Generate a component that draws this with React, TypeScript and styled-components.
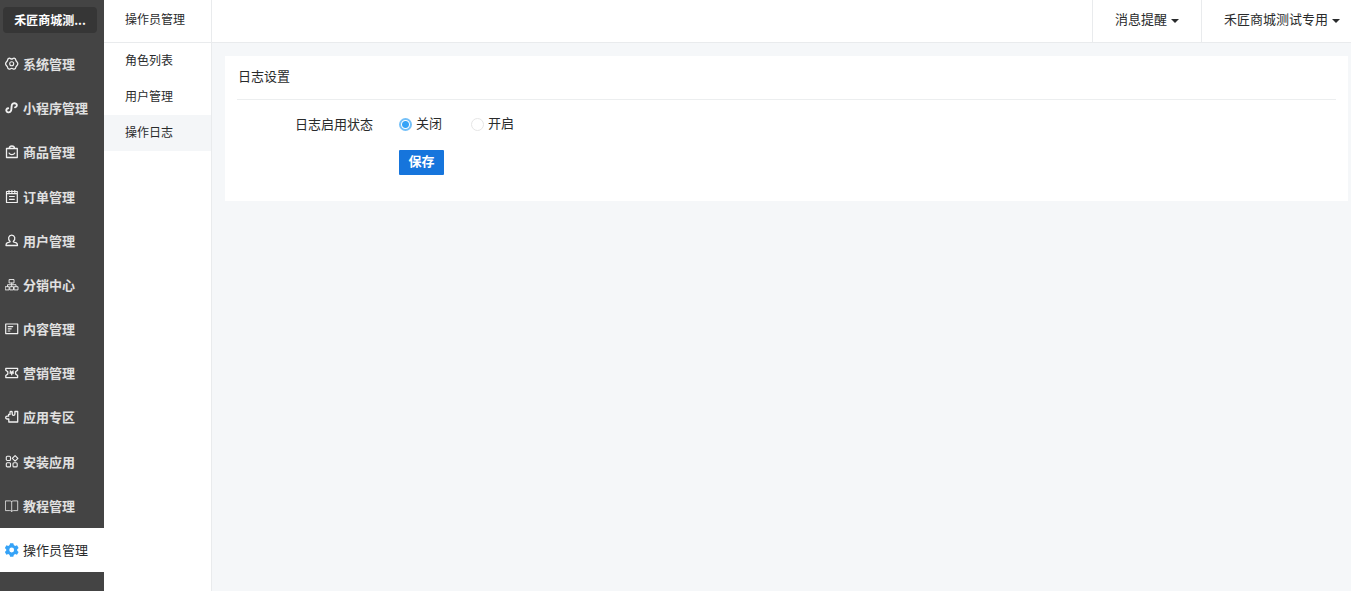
import React, { useState } from "react";
import styled, { createGlobalStyle, css } from "styled-components";

const GlobalStyle = createGlobalStyle`
  * { box-sizing: border-box; }
  body {
    margin: 0;
    background: #f5f7f9;
    color: #292b2c;
    font-family: "Noto Sans CJK SC", sans-serif;
    font-size: 13px;
    line-height: 20px;
  }
  button, input { font: inherit; color: inherit; }
  a { color: inherit; text-decoration: none; }
`;

const Shell = styled.div`
  display: flex;
  min-height: 100vh;
`;

const Sidebar = styled.aside`
  flex: none;
  width: 104px;
  background: #444;
`;

const StoreName = styled.div`
  height: 26px;
  margin: 7px 7px 9px 3px;
  padding: 0 10px;
  border-radius: 4px;
  background: #363636;
  color: #fff;
  font-size: 12px;
  font-weight: bold;
  line-height: 26px;
  text-align: center;
  white-space: nowrap;
`;

const MainNav = styled.nav`
  display: grid;
  grid-auto-rows: 1fr;
  height: 530px;
`;

const NavLink = styled.a<{ $active?: boolean }>`
  display: flex;
  align-items: center;
  gap: 4px;
  padding-left: 5px;
  color: #e0e0e0;
  font-weight: bold;
  white-space: nowrap;
  ${(p) =>
    p.$active &&
    css`
      background: #fff;
      color: #292b2c;
      font-weight: normal;
    `}
`;

const Icon = styled.svg`
  flex: none;
  width: 14px;
  height: 14px;
  fill: none;
  stroke: #f0f0f0;
  stroke-width: 1.1;
  stroke-linejoin: round;
  stroke-linecap: round;
`;

const SubMenu = styled.nav`
  flex: none;
  width: 108px;
  background: #fff;
  border-right: 1px solid #e9ebed;
  font-size: 12px;
`;

const SubTitle = styled.div`
  height: 43px;
  padding: 9px 21px 0;
  border-bottom: 1px solid #e9ebed;
`;

const SubLink = styled.a<{ $active?: boolean }>`
  display: block;
  height: 36px;
  padding: 0 21px;
  line-height: 34px;
  background: ${(p) => (p.$active ? "#f4f6f8" : "#fff")};
`;

const Main = styled.div`
  flex: 1;
  min-width: 0;
`;

const TopBar = styled.header`
  display: flex;
  justify-content: flex-end;
  height: 43px;
  background: #fff;
  border-bottom: 1px solid #e9ebed;
`;

const TopButton = styled.button<{ $last?: boolean }>`
  display: flex;
  align-items: center;
  gap: 4px;
  padding: 0 ${(p) => (p.$last ? 11 : 22)}px 4px 22px;
  border: 0;
  border-left: 1px solid #e9ebed;
  background: none;
  cursor: pointer;
`;

const Caret = styled.span`
  margin-top: 4px;
  border: 4px solid transparent;
  border-top-color: #292b2c;
  border-bottom: 0;
`;

const Card = styled.section`
  margin: 13px 3px 0 13px;
  padding: 0 12px 26px;
  background: #fff;
`;

const CardTitle = styled.h1`
  margin: 0;
  padding: 10px 0 13px 1px;
  border-bottom: 1px solid #eceeef;
  font-size: 13px;
  font-weight: normal;
`;

const Form = styled.form`
  display: grid;
  grid-template-columns: 136px 1fr;
  column-gap: 26px;
  row-gap: 16px;
  padding-top: 14px;
`;

const GroupLabel = styled.span`
  text-align: right;
`;

const Options = styled.div`
  display: flex;
  gap: 29px;
`;

const Option = styled.label`
  display: flex;
  align-items: center;
  gap: 4px;
  height: 18px;
  cursor: pointer;
`;

const Radio = styled.input`
  appearance: none;
  width: 13px;
  height: 13px;
  margin: 3px 0 0;
  border: 1px solid #e6e6e6;
  border-radius: 50%;
  background: #fff;
  &:checked {
    border: 2px solid #74c0f8;
    background: radial-gradient(circle, #36a3f7 3px, #fff 4px);
  }
`;

const SaveButton = styled.button`
  grid-column: 2;
  justify-self: start;
  width: 45px;
  height: 25px;
  padding: 0 0 4px;
  border: 0;
  border-radius: 1px;
  background: #1675dc;
  color: #fff;
  font-weight: bold;
  cursor: pointer;
`;

const menu: { label: string; icon: React.ReactNode }[] = [
  {
    label: "系统管理",
    icon: (
      <>
        <path
          strokeWidth="1.3"
          d="M4.2 1.2C5.3 1 5.7 2 6.7 2S8.1 1 9.2 1.2C10.6 1.6 10.9 2.6 11 3.7 11.4 4.8 12.8 5 12.8 6.7S11.4 8.6 11 9.7C10.9 10.8 10.6 11.8 9.2 12.2 8.1 12.4 7.7 11.4 6.7 11.4S5.3 12.4 4.2 12.2C2.8 11.8 2.5 10.8 2.4 9.7 2 8.6.6 8.4.6 6.7S2 4.8 2.4 3.7C2.5 2.6 2.8 1.6 4.2 1.2Z"
        />
        <circle cx="6.7" cy="6.7" r="2" />
      </>
    ),
  },
  {
    label: "小程序管理",
    icon: (
      <path
        strokeWidth="1.9"
        d="M3.2 7.2C1.4 7.6 1 9 1.5 10.1 2.1 11.4 4 11.8 5.3 10.8 6.6 9.8 6.3 8.5 6.5 6.8 6.7 5 6.4 3.8 7.6 2.8 8.8 1.9 10.8 2 11.6 3.2 12.3 4.4 11.6 5.9 10 6.3"
      />
    ),
  },
  {
    label: "商品管理",
    icon: (
      <path
        strokeWidth="1.3"
        d="M1.5 3.5H12.3V12.5H1.5ZM4.2 3.5C4.3 1.8 5.3 1 6.9 1S9.5 1.8 9.6 3.5M4.2 8.2C5.1 10 8.7 10 9.6 8.2"
      />
    ),
  },
  {
    label: "订单管理",
    icon: (
      <path
        strokeWidth="1.2"
        d="M1.5 1.5H12.3V12.5H1.5ZM1.5 3.7H12.3M4 .6V2.8M6.9 .6V2.8M9.8 .6V2.8M4.5 6.5H9.3M4.5 9.3H9.3"
      />
    ),
  },
  {
    label: "用户管理",
    icon: (
      <path
        strokeWidth="1.3"
        d="M5.1 7.5C3.8 6.4 3.3 5 3.7 3.4 4.2 1.8 5.3 1.1 6.7 1.1S9.2 1.8 9.7 3.4C10.1 5 9.6 6.4 8.3 7.5L8.5 8 11.4 8.9C12.2 9.3 12.5 10.1 12.5 11.5H1C1 10.1 1.3 9.3 2.1 8.9L4.9 8Z"
      />
    ),
  },
  {
    label: "分销中心",
    icon: (
      <path
        strokeWidth="0.9"
        d="M4.5 1.5H9V5H4.5ZM6.7 5V8.5M2.5 8.5V6.7H11V8.5M.6 8.7H4.1V11.9H.6ZM5.2 8.7H8.5V11.9H5.2ZM9.5 8.7H13V11.9H9.5Z"
      />
    ),
  },
  {
    label: "内容管理",
    icon: (
      <path
        strokeWidth="1.2"
        d="M.7 2H12.7V11.6H.7ZM3.2 4.6H7.7M3.2 6.8H6.2M3.2 9H4.8"
      />
    ),
  },
  {
    label: "营销管理",
    icon: (
      <path
        strokeWidth="1.3"
        d="M.8 2.3H12.6V4.2L10.6 5.8V7.9L12.6 9.6V11.6H.8V9.6L2.8 7.9V5.8L.8 4.2ZM5.2 5 6.7 6.7 8.2 5M4.9 7H8.5M6.7 6.7V8.8"
      />
    ),
  },
  {
    label: "应用专区",
    icon: (
      <path
        strokeWidth="1.3"
        d="M3.6 4.4H5V2.2C5 1.2 7.2 1.2 7.2 2.2V4C7.2 5.8 9.9 5.8 9.9 4V1.5H12.7V12H3.8V9H2.2C.2 9 .2 6.2 2.2 6.2H3.6Z"
      />
    ),
  },
  {
    label: "安装应用",
    icon: (
      <>
        <rect x="1.3" y="1.3" width="4.2" height="4.2" rx="1" />
        <rect x="1.3" y="7.7" width="4.2" height="4.2" rx="1" />
        <rect x="8" y="7.7" width="4.2" height="4.2" rx="1" />
        <path d="M10.1.6 12.9 3.4 10.1 6.2 7.3 3.4Z" />
      </>
    ),
  },
  {
    label: "教程管理",
    icon: (
      <path
        strokeWidth="0.8"
        d="M.8 1.9H4.8C6 1.9 6.7 2.3 6.7 3 6.7 2.3 7.5 1.9 8.6 1.9H12.7V11.6H8.6C7.5 11.6 6.7 12 6.7 12.4 6.7 12 6 11.6 4.8 11.6H.8ZM6.7 3V12.4"
      />
    ),
  },
  {
    label: "操作员管理",
    icon: (
      <path
        fill="#36a3f7"
        stroke="none"
        fillRule="evenodd"
        d="M5.1.2H8.3L8.8 2.1 10.1 2.9 12 2.3 13.6 5 12.2 6.3V7.7L13.6 9 12 11.7 10.1 11.1 8.8 11.9 8.3 13.8H5.1L4.6 11.9 3.3 11.1 1.4 11.7-.2 9 1.2 7.7V6.3L-.2 5 1.4 2.3 3.3 2.9 4.6 2.1ZM6.7 4.6A2.4 2.4 0 1 0 6.7 9.4 2.4 2.4 0 1 0 6.7 4.6Z"
      />
    ),
  },
];

const subMenu = ["角色列表", "用户管理", "操作日志"];

export default function App() {
  const [status, setStatus] = useState("off");

  return (
    <>
      <GlobalStyle />
      <Shell>
        <Sidebar>
          <StoreName>禾匠商城测...</StoreName>
          <MainNav>
            {menu.map((item) => (
              <NavLink
                key={item.label}
                href="#"
                $active={item.label === "操作员管理"}
              >
                <Icon viewBox="0 0 14 14" aria-hidden="true">
                  {item.icon}
                </Icon>
                {item.label}
              </NavLink>
            ))}
          </MainNav>
        </Sidebar>
        <SubMenu>
          <SubTitle>操作员管理</SubTitle>
          {subMenu.map((label) => (
            <SubLink key={label} href="#" $active={label === "操作日志"}>
              {label}
            </SubLink>
          ))}
        </SubMenu>
        <Main>
          <TopBar>
            <TopButton type="button">
              消息提醒 <Caret />
            </TopButton>
            <TopButton type="button" $last>
              禾匠商城测试专用 <Caret />
            </TopButton>
          </TopBar>
          <Card>
            <CardTitle>日志设置</CardTitle>
            <Form onSubmit={(e) => e.preventDefault()}>
              <GroupLabel id="log-status">日志启用状态</GroupLabel>
              <Options role="radiogroup" aria-labelledby="log-status">
                <Option>
                  <Radio
                    type="radio"
                    name="status"
                    checked={status === "off"}
                    onChange={() => setStatus("off")}
                  />
                  关闭
                </Option>
                <Option>
                  <Radio
                    type="radio"
                    name="status"
                    checked={status === "on"}
                    onChange={() => setStatus("on")}
                  />
                  开启
                </Option>
              </Options>
              <SaveButton type="submit">保存</SaveButton>
            </Form>
          </Card>
        </Main>
      </Shell>
    </>
  );
}
